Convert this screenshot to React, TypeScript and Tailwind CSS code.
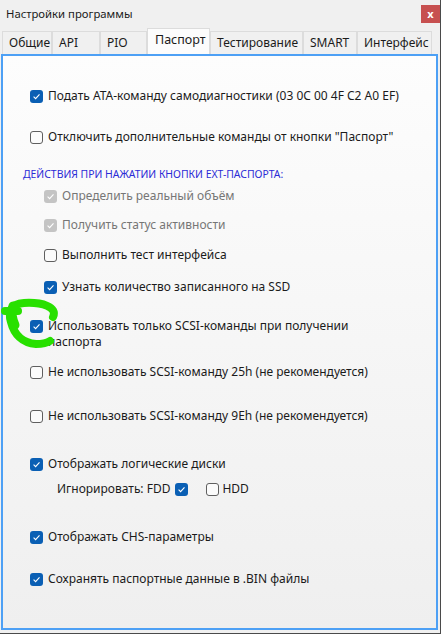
import React from "react";

type BoxState = "on" | "off" | "dis";

const Box = ({ state }: { state: BoxState }) => {
  if (state === "off") {
    return (
      <span className="block w-[13px] h-[13px] shrink-0 rounded-[3px] border border-[#5f5f5f] bg-[#fbfbfb]" />
    );
  }
  return (
    <span
      className={
        state === "on"
          ? "flex items-center justify-center w-[13px] h-[13px] shrink-0 rounded-[3px] bg-[#0a5fb4]"
          : "flex items-center justify-center w-[13px] h-[13px] shrink-0 rounded-[3px] bg-[#c4c4c4]"
      }
    >
      <svg width="9" height="9" viewBox="0 0 9 9">
        <path d="M1.6 4.7 L3.6 6.6 L7.5 2.4" fill="none" stroke="#fff" strokeWidth="1.1" />
      </svg>
    </span>
  );
};

const Row = ({
  state,
  children,
  className,
}: {
  state: BoxState;
  children: React.ReactNode;
  className: string;
}) => (
  <div className={`flex items-center gap-[5px] leading-[16px] ${className}`}>
    <Box state={state} />
    <span className={state === "dis" ? "text-[#767676]" : "text-[#1b1b1b]"}>{children}</span>
  </div>
);

const tabs = [
  { name: "Общие", w: "w-[50px]" },
  { name: "API", w: "w-[48px]" },
  { name: "PIO", w: "w-[47px]" },
  { name: "Паспорт", w: "w-[63px]" },
  { name: "Тестирование", w: "w-[93px]" },
  { name: "SMART", w: "w-[54px]" },
  { name: "Интерфейс", w: "w-[75px]" },
];

export default function App() {
  return (
    <div className="relative w-[444px] h-[636px] bg-white font-['Noto_Sans',sans-serif] text-[12px] text-[#1b1b1b] overflow-hidden">
      <div className="w-[441px] h-[634px] bg-[#f0f0f0] border-r border-b border-[#4a4a4a] flex flex-col">
        {/* title bar */}
        <div className="h-[28px] flex items-start justify-between shrink-0">
          <span className="pl-[6px] pt-[5px] leading-[17px] text-[11.3px]">Настройки программы</span>
          <div className="mt-[5px] w-[19px] h-[18px] bg-[#c75050] flex items-center justify-center text-white text-[11px] font-bold leading-none pb-[2px]">
            x
          </div>
        </div>

        {/* tabs */}
        <div className="h-[26px] flex items-end pl-[2px] shrink-0">
          {tabs.map((t) =>
            t.name === "Паспорт" ? (
              <div
                key={t.name}
                className={`${t.w} h-[26px] bg-[#fcfcfc] border border-b-0 border-[#dcdcdc] pl-[7px] pt-[3px] leading-[16px] text-[12.5px]`}
              >
                {t.name}
              </div>
            ) : (
              <div
                key={t.name}
                className={`${t.w} h-[23px] bg-[#f0f0f0] border border-b-0 border-[#dcdcdc] pl-[6px] pt-[3px] leading-[16px]`}
              >
                {t.name}
              </div>
            )
          )}
        </div>

        {/* panel */}
        <div className="ml-[1px] w-[437px] h-[576px] border-2 border-[#4da0f5] bg-gradient-to-b from-[#fdfdfd] to-[#efefef] flex flex-col">
          <Row state="on" className="mt-[32px] pl-[27px]">
            Подать АТА-команду самодиагностики (03 0C 00 4F C2 A0 EF)
          </Row>
          <Row state="off" className="mt-[25px] pl-[27px]">
            Отключить дополнительные команды от кнопки "Паспорт"
          </Row>
          <div className="mt-[22px] pl-[20px] text-[10.4px] leading-[14px] text-[#2b2bd6]">
            ДЕЙСТВИЯ ПРИ НАЖАТИИ КНОПКИ EXT-ПАСПОРТА:
          </div>
          <Row state="dis" className="mt-[7px] pl-[41px]">
            Определить реальный объём
          </Row>
          <Row state="dis" className="mt-[13px] pl-[41px]">
            Получить статус активности
          </Row>
          <Row state="off" className="mt-[14px] pl-[41px]">
            Выполнить тест интерфейса
          </Row>
          <Row state="on" className="mt-[16px] pl-[41px]">
            Узнать количество записанного на SSD
          </Row>
          <div className="mt-[23px] pl-[27px] flex items-start gap-[5px] leading-[16px]">
            <span className="mt-[2px]">
              <Box state="on" />
            </span>
            <span>
              Использовать только SCSI-команды при получении
              <br />
              паспорта
            </span>
          </div>
          <Row state="off" className="mt-[14px] pl-[27px]">
            Не использовать SCSI-команду 25h (не рекомендуется)
          </Row>
          <Row state="off" className="mt-[28px] pl-[27px]">
            Не использовать SCSI-команду 9Eh (не рекомендуется)
          </Row>
          <Row state="on" className="mt-[32px] pl-[27px]">
            Отображать логические диски
          </Row>
          <div className="mt-[9px] pl-[54px] flex items-center leading-[16px]">
            <span>Игнорировать: FDD</span>
            <span className="ml-[5px]">
              <Box state="on" />
            </span>
            <span className="ml-[18px]">
              <Box state="off" />
            </span>
            <span className="ml-[3px]">HDD</span>
          </div>
          <Row state="on" className="mt-[32px] pl-[27px]">
            Отображать CHS-параметры
          </Row>
          <Row state="on" className="mt-[26px] pl-[27px]">
            Сохранять паспортные данные в .BIN файлы
          </Row>
        </div>
      </div>

      {/* hand-drawn green mark */}
      <svg className="absolute left-0 top-0 pointer-events-none" width="70" height="360" viewBox="0 0 70 360">
        <g fill="none" stroke="#28e000" strokeLinecap="round" strokeLinejoin="round">
          <path d="M53 317 C58 307, 42 302, 24 303 C10 304, 8 312, 11 322 C14 334, 22 343, 36 344 C42 344, 47 343, 50 341" strokeWidth="8" />
          <path d="M5 311 L18 311" strokeWidth="8" />
          <path d="M13 306 C11 312, 12 318, 15 325" strokeWidth="9" />
        </g>
      </svg>
    </div>
  );
}
